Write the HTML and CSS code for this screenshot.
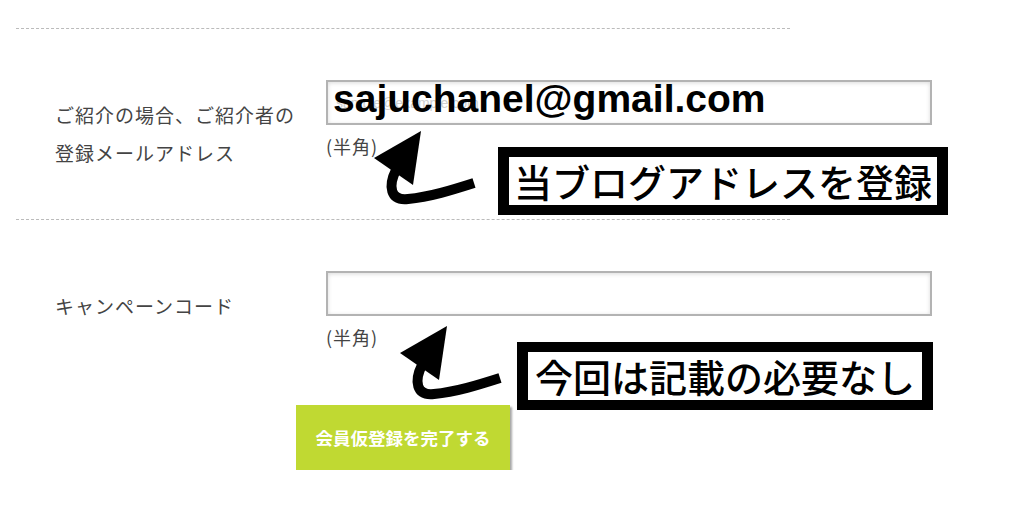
FILE: index.html
```html
<!DOCTYPE html>
<html lang="ja">
<head>
    <meta charset="UTF-8">
    <title>会員仮登録</title>
    <link rel="stylesheet" href="styles.css">
</head>
<body>

    <!-- 登録フォーム -->
    <div id="form">
        <div class="row">
            <div class="label">ご紹介の場合、ご紹介者の<br>登録メールアドレス</div>
            <div class="field">
                <input type="text" class="text-input" placeholder="sample@example.com">
                <span class="pasted-text">sajuchanel@gmail.com</span>
                <p class="note">(半角)</p>
            </div>
        </div>
        <div class="row">
            <div class="label">キャンペーンコード</div>
            <div class="field">
                <input type="text" class="text-input">
                <p class="note">(半角)</p>
            </div>
        </div>

        <div class="actions">
            <button class="submit-button">会員仮登録を完了する</button>
        </div>

        <!-- 注釈（スクショの上に書き込んだもの） -->
        <div class="memo memo-first">当ブログアドレスを登録</div>
        <div class="memo memo-second">今回は記載の必要なし</div>

        <svg class="arrows" width="1024" height="525" viewBox="0 0 1024 525">
            <g id="arrow">
                <polygon points="421,131 374,158 413,185" fill="#000"/>
                <path d="M396 170 C388 186 390 201 408 199 C430 197 452 190 474 183" fill="none" stroke="#000" stroke-width="10"/>
            </g>
            <use href="#arrow" x="26" y="195"/>
        </svg>
    </div>

</body>
</html>
```

FILE: styles.css
```css
/* 全体 */
body {
    margin: 0;
    padding: 0;
    background: #fff;
    font-family: "Noto Sans CJK JP", sans-serif;
    color: #444;
}

#form {
    position: relative;
    width: 774px;
    margin-left: 16px;
    padding-top: 28px;
}

.row {
    display: flex;
    border-top: 1px dashed #bbb;
    padding: 51px 0 47px;
}

.row + .row {
    padding-bottom: 0;
}

.label {
    flex: none;
    width: 271px;
    padding-left: 39px;
    padding-top: 16px;
    font-size: 19px;
    line-height: 38px;
    letter-spacing: 1px;
}

.field {
    position: relative;
    flex: none;
    width: 606px;
}

.text-input {
    display: block;
    box-sizing: border-box;
    width: 606px;
    height: 45px;
    margin: 0;
    padding: 0 8px;
    border: 2px solid #b3b3b3;
    box-shadow: inset 0 1px 4px rgba(0, 0, 0, 0.15);
    font-family: "Liberation Sans", sans-serif;
    font-size: 14px;
    background: #fff;
}

.text-input::placeholder {
    color: #d0d0d0;
}

.pasted-text {
    position: absolute;
    left: 7px;
    top: -3px;
    font-family: "Liberation Sans", Arial, sans-serif;
    font-weight: bold;
    font-size: 39px;
    line-height: 44px;
    color: #000;
}

.note {
    margin: 8px 0 0;
    font-size: 18px;
    line-height: 26px;
    letter-spacing: 1px;
}

.actions {
    display: flex;
    justify-content: center;
    margin-top: 55px;
}

.submit-button {
    width: 214px;
    height: 65px;
    border: none;
    background: #c0d932;
    color: #fff;
    font-family: "Noto Sans CJK JP", sans-serif;
    font-weight: bold;
    font-size: 17.5px;
    box-shadow: 2px 2px 2px rgba(0, 0, 0, 0.35);
}

/* 注釈の枠 */
.memo {
    position: absolute;
    border: solid #000;
    border-width: 10px 11px;
    padding: 0 5px;
    background: #fff;
    color: #000;
    font-size: 38px;
    font-weight: 500;
    line-height: 48px;
    white-space: nowrap;
}

.memo-first {
    left: 482px;
    top: 147px;
}

.memo-second {
    left: 501px;
    top: 342px;
    padding: 0 7px;
}

.arrows {
    position: absolute;
    left: -16px;
    top: 0;
    pointer-events: none;
}
```
